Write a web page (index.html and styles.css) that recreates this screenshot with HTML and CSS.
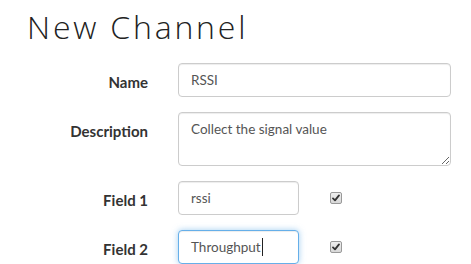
FILE: index.html
```html
<!DOCTYPE html>
<html>
<head>
    <meta charset="utf-8" />
    <title>New Channel</title>
    <link rel="stylesheet" href="styles.css">
</head>
<body>
<h1 class="page-title">New Channel</h1>

<form class="channel-form">
    <label class="form-label">Name</label>
    <div class="form-field">
        <input class="form-control" type="text" value="RSSI" readonly>
    </div>

    <label class="form-label">Description</label>
    <div class="form-field">
        <textarea class="form-control form-area" readonly>Collect the signal value</textarea>
    </div>

    <label class="form-label">Field 1</label>
    <div class="form-field field-row">
        <input class="form-control form-short" type="text" value="rssi" readonly>
        <span class="check-box">
            <svg width="8" height="8" viewBox="0 0 8 8"><path d="M1 4.4 L3 6.4 L7 1.4" fill="none" stroke="#333" stroke-width="1.8" stroke-linecap="round" stroke-linejoin="round"/></svg>
        </span>
    </div>

    <label class="form-label">Field 2</label>
    <div class="form-field field-row">
        <div class="form-control form-short is-focus">Throughput<span class="text-caret"></span></div>
        <span class="check-box">
            <svg width="8" height="8" viewBox="0 0 8 8"><path d="M1 4.4 L3 6.4 L7 1.4" fill="none" stroke="#333" stroke-width="1.8" stroke-linecap="round" stroke-linejoin="round"/></svg>
        </span>
    </div>
</form>
</body>
</html>
```

FILE: styles.css
```css
html {
    background: #fff;
}

body {
    margin: 0;
    color: #333;
    font-family: "Lato", "Liberation Sans", sans-serif;
    font-size: 14px;
    overflow: hidden;
}

.page-title {
    margin: 7px 0 16px 27px;
    font-family: "Open Sans", "Liberation Sans", sans-serif;
    font-weight: 300;
    font-size: 32px;
    line-height: 40px;
    letter-spacing: 2.8px;
    color: #222;
}

.channel-form {
    display: grid;
    grid-template-columns: 148px 273px;
    column-gap: 30px;
    row-gap: 15px;
}

.form-label {
    padding-top: 9px;
    line-height: 20px;
    font-size: 15px;
    font-weight: bold;
    text-align: right;
    color: #333;
}

.form-control {
    display: block;
    box-sizing: border-box;
    width: 100%;
    height: 34px;
    margin: 0;
    padding: 6px 12px;
    border: 1px solid #ccc;
    border-radius: 4px;
    background: #fff;
    color: #555;
    font-family: "Lato", "Liberation Sans", sans-serif;
    font-size: 13.5px;
    line-height: 20px;
    box-shadow: inset 0 1px 1px rgba(0, 0, 0, 0.075);
    outline: none;
}

.form-area {
    height: 54px;
    resize: vertical;
}

.field-row {
    display: flex;
    align-items: center;
}

.form-short {
    width: 121px;
    flex: none;
}

.is-focus {
    border-color: #66afe9;
    box-shadow: inset 0 1px 1px rgba(0, 0, 0, 0.075), 0 0 6px rgba(102, 175, 233, 0.6);
    color: #555;
}

.text-caret {
    display: inline-block;
    width: 1px;
    height: 18px;
    margin-left: 1px;
    vertical-align: -4px;
    background: #222;
}

.check-box {
    display: flex;
    align-items: center;
    justify-content: center;
    box-sizing: border-box;
    width: 12px;
    height: 12px;
    margin-left: 31px;
    border: 1px solid #999;
    border-radius: 2px;
    background: linear-gradient(#eee, #d8d8d8);
}
```
